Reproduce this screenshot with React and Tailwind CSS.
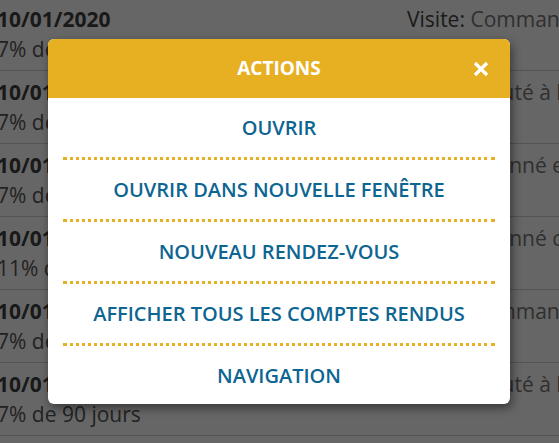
import React from "react";

const rows = [
  { date: "10/01/2020", pct: "7% de 90 jours", label: "Visite:", value: "Commande client" },
  { date: "10/01/2020", pct: "7% de 90 jours", label: "Visite:", value: "Ajouté à la liste" },
  { date: "10/01/2020", pct: "7% de 90 jours", label: "Visite:", value: "Abonné en ligne" },
  { date: "10/01/2020", pct: "11% de 90 jours", label: "Visite:", value: "Abonné car absent" },
  { date: "10/01/2020", pct: "7% de 90 jours", label: "Visite:", value: "Commande client" },
  { date: "10/01/2020", pct: "7% de 90 jours", label: "Visite:", value: "Ajouté à la liste" },
];

const items = [
  "OUVRIR",
  "OUVRIR DANS NOUVELLE FENÊTRE",
  "NOUVEAU RENDEZ-VOUS",
  "AFFICHER TOUS LES COMPTES RENDUS",
  "NAVIGATION",
];

export default function App() {
  return (
    <div
      className="relative w-[559px] h-[443px] overflow-hidden bg-white"
      style={{ fontFamily: '"Open Sans", "Liberation Sans", sans-serif' }}
    >
      <div className="-mt-[2px] -ml-[3px]">
        {rows.map((r, i) => (
          <div key={i} className="flex border-b border-[#cfcfcf] pt-[6px] pb-[6px]">
            <div className="w-[410px] shrink-0 text-[21px] leading-[30px] whitespace-nowrap">
              <div className="font-bold text-[#3f3f3f]">{r.date}</div>
              <div className="text-[#555]">{r.pct}</div>
            </div>
            <div className="text-[21px] leading-[30px] whitespace-nowrap">
              <span className="text-[#444]">{r.label}</span>{" "}
              <span className="text-[#777]">{r.value}</span>
            </div>
          </div>
        ))}
      </div>

      <div className="absolute inset-0 bg-black/60" />

      <div className="absolute left-[48px] top-[39px] w-[462px] rounded-[6px] overflow-hidden bg-white shadow-[2px_4px_10px_rgba(0,0,0,0.45)]">
        <div className="relative h-[59px] bg-[#e7b022] flex items-center justify-center">
          <span className="text-white font-bold text-[19px]">ACTIONS</span>
          <svg
            className="absolute right-[21px] top-[22px]"
            width="16"
            height="16"
            viewBox="0 0 16 16"
          >
            <path d="M2 2 L14 14 M14 2 L2 14" stroke="white" strokeWidth="3.2" strokeLinecap="butt" />
          </svg>
        </div>
        <div>
          {items.map((t, i) => (
            <div
              key={i}
              className={
                "mx-[15px] text-center text-[20px] font-semibold text-[#0d6592] leading-[25px] whitespace-nowrap " +
                (i < items.length - 1
                  ? "pt-[17px] pb-[17px] border-b-[3px] border-dotted border-[#e7b022]"
                  : "pt-[17px] pb-[16px]")
              }
            >
              {t}
            </div>
          ))}
        </div>
      </div>
    </div>
  );
}
